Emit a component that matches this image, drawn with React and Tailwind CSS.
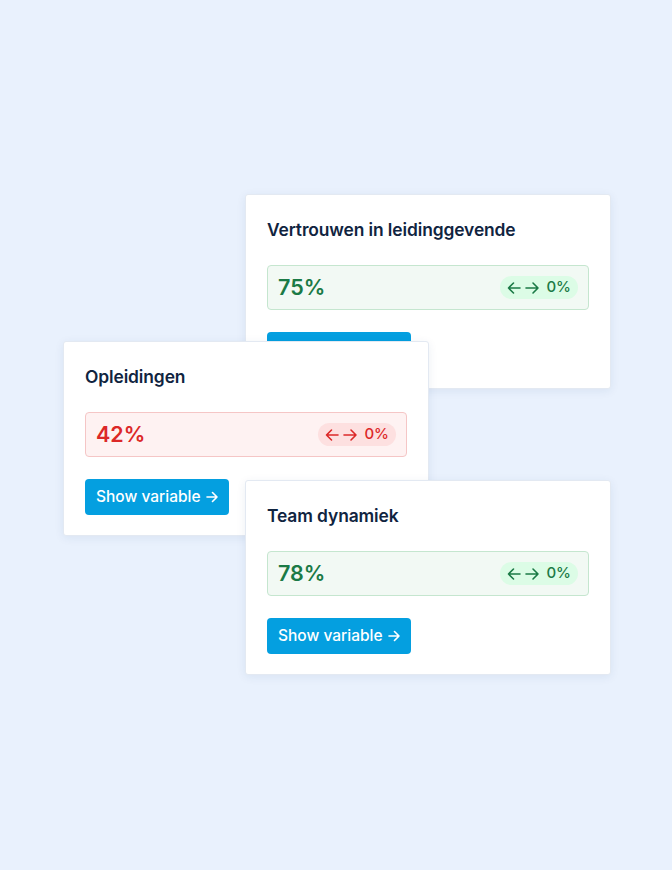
const cards = [
  { title: 'Vertrouwen in leidinggevende', value: '75%', tone: 'green', pos: 'left-[245px] top-[194px] z-10' },
  { title: 'Opleidingen', value: '42%', tone: 'red', pos: 'left-[63px] top-[341px] z-20' },
  { title: 'Team dynamiek', value: '78%', tone: 'green', pos: 'left-[245px] top-[480px] z-30' },
]

function Arrows() {
  return (
    <svg width="33" height="14" viewBox="0 0 33 14" fill="none" stroke="currentColor" strokeWidth="1.6" strokeLinecap="round" strokeLinejoin="round">
      <path d="M13 7H1.5M6.5 2L1.5 7l5 5" />
      <path d="M19 7h12M26 2l5 5-5 5" />
    </svg>
  )
}

function Card({ title, value, tone, pos }) {
  const green = tone === 'green'
  return (
    <div className={`absolute ${pos} w-[366px] h-[195px] bg-white rounded-[3px] border border-[#e3e9f2] shadow-[0_2px_10px_rgba(30,60,110,0.08)] px-[21px] pt-[23px]`}>
      <h3 className="text-[17.4px] leading-[24px] font-semibold text-[#10243f] tracking-[-0.1px]">{title}</h3>
      <div className={`mt-[23px] h-[45px] rounded-[4px] border flex items-center justify-between pl-[10px] pr-[10px] ${green ? 'bg-[#f2f9f4] border-[#c5e6cf]' : 'bg-[#fef2f2] border-[#f5c6c6]'}`}>
        <span className={`text-[21.5px] font-semibold ${green ? 'text-[#1b7a46]' : 'text-[#dc2828]'}`}>{value}</span>
        <span className={`flex items-center gap-[6px] h-[23px] px-[7px] rounded-full text-[15px] font-medium ${green ? 'bg-[#dcfce6] text-[#1b7a46]' : 'bg-[#fde0e0] text-[#dc2828]'}`}>
          <Arrows />
          0%
        </span>
      </div>
      <button className="mt-[22px] h-[36px] px-[11px] rounded-[4px] bg-[#049fe0] text-white text-[15.5px] font-medium flex items-center gap-[5px]">
        Show variable
        <svg width="12" height="12" viewBox="0 0 12 12" fill="none" stroke="currentColor" strokeWidth="1.6" strokeLinecap="round" strokeLinejoin="round">
          <path d="M1 6h10M6.5 1.5L11 6l-4.5 4.5" />
        </svg>
      </button>
    </div>
  )
}

export default function App() {
  return (
    <div className="relative w-[672px] h-[870px] bg-[#e9f1fd] overflow-hidden" style={{ fontFamily: 'Inter, "Noto Sans", sans-serif' }}>
      {cards.map((c) => (
        <Card key={c.title} {...c} />
      ))}
    </div>
  )
}
